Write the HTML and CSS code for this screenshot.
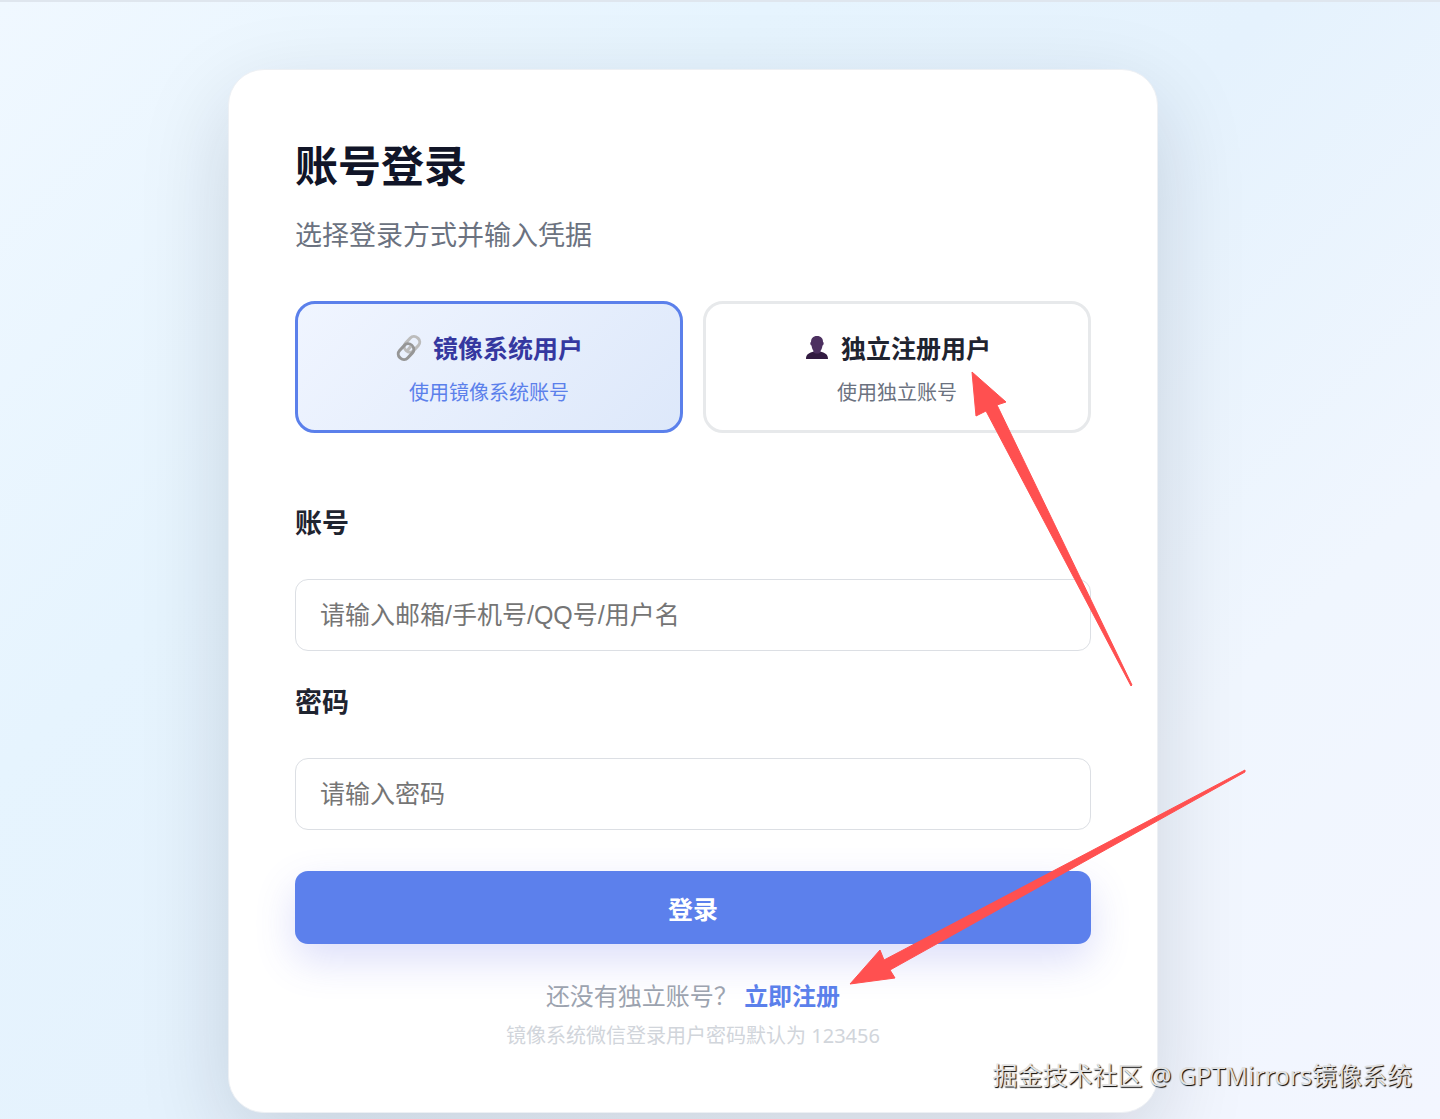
FILE: index.html
```html
<!DOCTYPE html>
<html lang="zh-CN">
<head>
  <meta charset="UTF-8" />
  <meta name="viewport" content="width=device-width, initial-scale=1.0" />
  <title>账号登录</title>
  <link rel="stylesheet" href="styles.css">
</head>
<body>

<main class="page">
  <form class="card" onsubmit="return false">
    <h1>账号登录</h1>
    <p class="subtitle">选择登录方式并输入凭据</p>

    <!-- Login type -->
    <div class="options">
      <button type="button" class="option active">
        <span class="option-title">
          <svg class="icon" viewBox="0 0 28 28" fill="none" stroke-width="3">
            <rect x="9" y="5" width="17" height="11" rx="5" stroke="#bcbcbc" transform="rotate(-47 17 11)"/>
            <rect x="2" y="12" width="17" height="11" rx="5" stroke="#969696" transform="rotate(-47 11 17)"/>
            <path d="M12 17l4-5" stroke="#bcbcbc"/>
          </svg>
          镜像系统用户
        </span>
        <span class="option-desc">使用镜像系统账号</span>
      </button>
      <button type="button" class="option">
        <span class="option-title">
          <svg class="icon" viewBox="0 0 28 28">
            <path d="M3 25c0-5 3-6 8-7.500v-3h6v3c5 1.500 8 2.500 8 7.500z" fill="#321b41"/>
            <path d="M14 2c-4 0-6 2.500-6 6-1 0-1 3 .500 3.500C9 15 10 16 10.500 17v1c1 2 6 2 7 0v-1c.500-1 1.500-2 2-5.500C21 11 21 8 20 8c0-3.500-2-6-6-6z" fill="#4c3060"/>
          </svg>
          独立注册用户
        </span>
        <span class="option-desc">使用独立账号</span>
      </button>
    </div>

    <label for="account">账号</label>
    <input id="account" type="text" placeholder="请输入邮箱/手机号/QQ号/用户名">
    <label for="password">密码</label>
    <input id="password" type="password" placeholder="请输入密码">

    <button type="submit" class="submit">登录</button>

    <p class="register">还没有独立账号？ <a href="#">立即注册</a></p>
    <p class="hint">镜像系统微信登录用户密码默认为 123456</p>
  </form>
</main>

<!-- Arrows pointing at the two ways to register -->
<svg class="arrows" viewBox="0 0 1440 1119" width="1440" height="1119" fill="#ff5050" stroke="#ff5050" stroke-linejoin="round">
  <path d="M972 372L1006 402L997 405L1132 685L1131 686L986 411L976 416Z"/>
  <path d="M850 984L880 950L884 960L1245 770L1245 772L890 970L895 978Z"/>
</svg>

<div class="watermark">掘金技术社区 @ GPTMirrors镜像系统</div>

</body>
</html>
```

FILE: styles.css
```css
* { margin: 0; padding: 0; box-sizing: border-box; }
body {
  position: relative;
  min-height: 100vh;
  overflow: hidden;
  background: linear-gradient(135deg, #f0f8ff 0%, #e6f4fe 30%, #e5f2fd 50%, #f0f6fe 75%, #f3f6ff 100%);
  border-top: 2px solid #dfe6ee;
  font-family: "Noto Sans", "Noto Sans CJK SC", sans-serif;
  color: #1f2430;
}
.page {
  padding: 67px 54px 7px 0;
}
.card {
  display: flex;
  flex-direction: column;
  width: 100%;
  max-width: 930px;
  margin: 0 auto;
  padding: 64px 66px 56px;
  background: #fff;
  border: 1px solid #edf0f4;
  border-radius: 36px;
  box-shadow: 0 30px 90px rgba(15, 23, 42, 0.15);
}
h1 {
  font-size: 43px;
  line-height: 64px;
  color: #111528;
}
.subtitle {
  margin-top: 17px;
  font-size: 27px;
  line-height: 40px;
  color: #6b7280;
}
.options {
  display: grid;
  grid-template-columns: 1fr 1fr;
  gap: 20px;
  margin: 46px 0 70px;
}
.option {
  display: flex;
  flex-direction: column;
  align-items: center;
  gap: 10px;
  padding: 24px 20px 22px;
  background: #fff;
  border: 3px solid #e7e9eb;
  border-radius: 20px;
  font-family: inherit;
  color: #1f2430;
  cursor: pointer;
}
.option-title {
  display: flex;
  align-items: center;
  gap: 10px;
  font-size: 25px;
  line-height: 40px;
  font-weight: 700;
}
.option-desc {
  font-size: 20px;
  line-height: 30px;
  color: #6b7280;
}
.option.active {
  background: linear-gradient(135deg, #f0f5ff, #dde8fa);
  border-color: #5b80eb;
  color: #3538a0;
}
.option.active .option-desc {
  color: #5b80eb;
}
.icon {
  width: 28px;
  height: 28px;
}
label {
  font-size: 27px;
  line-height: 40px;
  font-weight: 700;
}
input {
  height: 72px;
  margin: 36px 0 31px;
  padding: 0 24px;
  background: #fff;
  border: 1px solid #dcdfe4;
  border-radius: 13px;
  font-family: "Liberation Sans", "Noto Sans CJK SC", sans-serif;
  font-size: 25px;
}
input::placeholder {
  color: #757575;
}
.submit {
  height: 73px;
  margin-top: 10px;
  background: #5c80ec;
  border: none;
  border-radius: 13px;
  box-shadow: 0 16px 40px rgba(79, 90, 229, 0.2);
  font-family: inherit;
  font-size: 25px;
  font-weight: 700;
  color: #fff;
  cursor: pointer;
}
.register {
  margin-top: 32px;
  text-align: center;
  font-size: 24px;
  line-height: 40px;
  color: #9ca3af;
}
.register a {
  color: #5b80eb;
  font-weight: 700;
  text-decoration: none;
}
.hint {
  text-align: center;
  font-size: 20px;
  line-height: 40px;
  color: #d1d5db;
}
.arrows {
  position: absolute;
  top: -2px;
  left: 0;
  pointer-events: none;
}
.watermark {
  position: absolute;
  right: 28px;
  bottom: 25px;
  font-size: 25px;
  line-height: 40px;
  color: #e2e2e2;
  text-shadow: 1px 1px 1px #000;
}
```
